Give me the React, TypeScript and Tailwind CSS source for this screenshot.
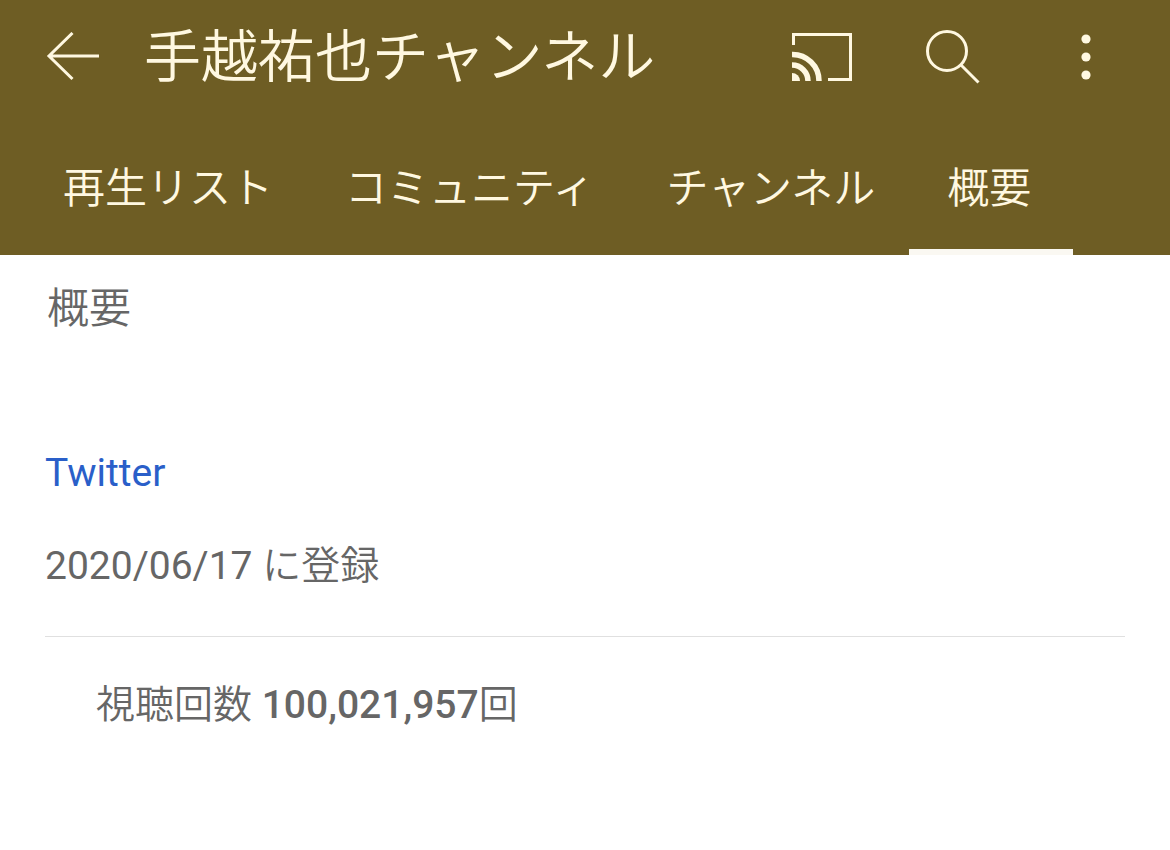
import { useState } from "react";

const tabs = ["再生リスト", "コミュニティ", "チャンネル", "概要"];

function BackIcon() {
  return (
    <svg width="54" height="50" viewBox="0 0 54 50" fill="none" stroke="currentColor" strokeWidth="3">
      <path d="M26.5 1 3 24l23.5 23M3 24h50" />
    </svg>
  );
}

function CastIcon() {
  return (
    <svg width="60" height="48" viewBox="0 0 60 48" fill="none" stroke="currentColor">
      <path d="M1.5 12V1.5h57v45H36" strokeWidth="3" />
      <path d="M0 21.5A26.5 26.5 0 0 1 27 48M0 32a16 16 0 0 1 16 16" strokeWidth="5.5" />
      <path d="M0 40a8 8 0 0 1 8 8H0z" fill="currentColor" stroke="none" />
    </svg>
  );
}

function SearchIcon() {
  return (
    <svg width="54" height="54" viewBox="0 0 54 54" fill="none" stroke="currentColor" strokeWidth="3">
      <circle cx="21" cy="21" r="19.5" />
      <path d="m35 35 17.5 17.5" />
    </svg>
  );
}

function MoreIcon() {
  return (
    <svg width="10" height="46" viewBox="0 0 10 46" fill="currentColor">
      <circle cx="5" cy="5" r="4.6" />
      <circle cx="5" cy="23" r="4.6" />
      <circle cx="5" cy="41" r="4.6" />
    </svg>
  );
}

export default function App() {
  const [active, setActive] = useState("概要");

  return (
    <div className="min-h-screen bg-white font-['Roboto','Noto_Sans_CJK_JP',sans-serif] text-[#666666]">
      <header className="bg-[#6e5d24] text-[#fff8e1]">
        <div className="flex h-[114px] items-center pl-[46px] pr-[55px]">
          <button aria-label="戻る" className="shrink-0">
            <BackIcon />
          </button>
          <h1 className="ml-11 flex-1 whitespace-nowrap pb-2.5 font-['Noto_Sans_CJK_JP',sans-serif] text-[57px] leading-none font-[350]">
            手越祐也チャンネル
          </h1>
          <div className="flex items-center gap-[74px]">
            <button aria-label="キャスト">
              <CastIcon />
            </button>
            <button aria-label="検索">
              <SearchIcon />
            </button>
            <button aria-label="その他" className="pl-[27px] pr-6">
              <MoreIcon />
            </button>
          </div>
        </div>
        <nav className="flex pl-[27px]">
          {tabs.map((tab) => (
            <button
              key={tab}
              onClick={() => setActive(tab)}
              className="relative h-[141px] whitespace-nowrap px-9 pb-px font-['Noto_Sans_CJK_JP',sans-serif] text-[42px] font-[350]"
            >
              {tab}
              {active === tab && <span className="absolute -left-0.5 -right-1.5 bottom-0 h-1.5 bg-[#faf8f2]" />}
            </button>
          ))}
        </nav>
      </header>

      <main className="px-[45px]">
        <h2 className="pl-0.5 pt-5 font-['Noto_Sans_CJK_JP',sans-serif] text-[42px] leading-[60px] font-[350]">概要</h2>
        <p className="mt-[108px] text-[39px] leading-[60px]">
          <a href="#twitter" className="text-[#2a5fc9]">
            Twitter
          </a>
        </p>
        <p className="mt-[33px] text-[39px] leading-[60px]">
          2020/06/17 <span className="font-[350]">に登録</span>
        </p>
        <hr className="mt-10 border-[#e0e0e0]" />
        <p className="mt-[38px] pl-[51px] text-[39px] leading-[60px]">
          <span className="font-[350]">視聴回数</span> <strong className="font-medium">100,021,957</strong>
          <span className="font-[350]">回</span>
        </p>
      </main>
    </div>
  );
}
